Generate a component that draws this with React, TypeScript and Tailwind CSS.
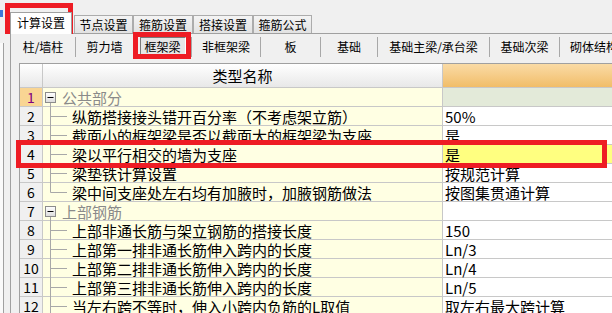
import React from "react";

type Row = { n: number; name: string; value?: string; group?: boolean; last?: boolean };

const rows: Row[] = [
  { n: 1, name: "公共部分", group: true },
  { n: 2, name: "纵筋搭接接头错开百分率（不考虑架立筋）", value: "50%" },
  { n: 3, name: "截面小的框架梁是否以截面大的框架梁为支座", value: "是" },
  { n: 4, name: "梁以平行相交的墙为支座", value: "是" },
  { n: 5, name: "梁垫铁计算设置", value: "按规范计算" },
  { n: 6, name: "梁中间支座处左右均有加腋时，加腋钢筋做法", value: "按图集贯通计算", last: true },
  { n: 7, name: "上部钢筋", group: true },
  { n: 8, name: "上部非通长筋与架立钢筋的搭接长度", value: "150" },
  { n: 9, name: "上部第一排非通长筋伸入跨内的长度", value: "Ln/3" },
  { n: 10, name: "上部第二排非通长筋伸入跨内的长度", value: "Ln/4" },
  { n: 11, name: "上部第三排非通长筋伸入跨内的长度", value: "Ln/5" },
  { n: 12, name: "当左右跨不等时，伸入小跨内负筋的L取值", value: "取左右最大跨计算" },
];

const subTabs: { label: string; w: string; selected?: boolean }[] = [
  { label: "柱/墙柱", w: "w-[64px]" },
  { label: "剪力墙", w: "w-[57px]" },
  { label: "框架梁", w: "w-[57px]", selected: true },
  { label: "非框架梁", w: "w-[68px]" },
  { label: "板", w: "w-[59px]" },
  { label: "基础", w: "w-[56px]" },
  { label: "基础主梁/承台梁", w: "w-[111px]" },
  { label: "基础次梁", w: "w-[69px]" },
];

function GroupTree() {
  return (
    <svg width="19" height="18" className="shrink-0 overflow-visible">
      <defs>
        <linearGradient id="bx" x1="0" y1="0" x2="0" y2="1">
          <stop offset="0" stopColor="#ffffff" />
          <stop offset="1" stopColor="#dcdcdc" />
        </linearGradient>
      </defs>
      <rect x="2.5" y="4.5" width="10" height="10" fill="url(#bx)" stroke="#8c8c8c" />
      <line x1="4.5" y1="9.5" x2="10.5" y2="9.5" stroke="#000" />
      <line x1="7.5" y1="15" x2="7.5" y2="19" stroke="#a8a8a8" />
    </svg>
  );
}

function ChildTree({ last }: { last?: boolean }) {
  return (
    <svg width="29" height="18" className="shrink-0 overflow-visible">
      <line x1="7.5" y1="-1" x2="7.5" y2={last ? 9.5 : 19} stroke="#a8a8a8" />
      <line x1="7.5" y1="9.5" x2="24" y2="9.5" stroke="#a8a8a8" />
    </svg>
  );
}

export default function App() {
  return (
    <div className="relative w-[612px] h-[313px] overflow-hidden bg-[#f0f0f0] flex font-['Noto_Sans_CJK_SC','Noto_Sans',sans-serif] text-black">
      {/* left strip */}
      <div className="w-[10px] shrink-0 flex flex-col">
        <div className="mt-[10px] w-[3px] h-[7px] bg-[#3c78d8]" />
        <div className="mt-[26px] flex-1 flex">
          <div className="w-[3px] bg-[#fafafa]" />
          <div className="w-px bg-[#a0a0a0]" />
        </div>
      </div>

      {/* main tab control */}
      <div className="flex-1 flex flex-col min-w-0">
        <div className="h-[33px] flex items-end shrink-0">
          <div className="relative z-10 -mb-px w-[62px] h-[22px] bg-white border border-b-0 border-[#a0a0a0] flex items-center justify-center text-[12px] leading-none pb-px">
            计算设置
          </div>
          {["节点设置", "箍筋设置", "搭接设置", "箍筋公式"].map((t, i) => (
            <div
              key={t}
              className={`${i === 0 ? "ml-[2px] w-[59px]" : i === 3 ? "w-[59px]" : "w-[60px]"} h-[18px] bg-linear-to-b from-[#f4f4f4] to-[#e2e2e2] border border-b-0 border-[#acacac] flex items-center justify-center text-[12px] leading-none`}
            >
              {t}
            </div>
          ))}
        </div>

        <div className="flex-1 flex flex-col border-l border-t border-[#a0a0a0] min-h-0">
          {/* sub tabs */}
          <div className="h-[29px] shrink-0 flex items-center pb-[3px] text-[12px] leading-none whitespace-nowrap">
            {subTabs.map((s) => (
              <React.Fragment key={s.label}>
                <div className={`${s.w} shrink-0 flex items-center justify-center`}>
                  {s.selected ? (
                    <div className="w-[46px] h-[20px] flex items-center justify-center bg-[#e6e6e6] border border-t-[#7a7a7a] border-l-[#7a7a7a] border-b-white border-r-white">
                      {s.label}
                    </div>
                  ) : (
                    s.label
                  )}
                </div>
                <div className="w-px h-[20px] bg-[#a8a8a8] shrink-0" />
              </React.Fragment>
            ))}
            <div className="pl-[10px]">砌体结构</div>
          </div>

          {/* grid */}
          <div className="ml-[8px] flex-1 border-t border-l border-[#a0a0a0] bg-white flex flex-col min-h-0 text-[15px] leading-none">
            <div className="h-[24px] shrink-0 flex border-b border-[#c8c8c8]">
              <div className="w-[23px] shrink-0 border-r border-[#c8c8c8] bg-linear-to-b from-white to-[#e8e8e8]" />
              <div className="w-[400px] shrink-0 border-r border-[#c8c8c8] bg-linear-to-b from-white to-[#e8e8e8] flex items-center justify-center">
                类型名称
              </div>
              <div className="flex-1 bg-linear-to-b from-[#fadba5] to-[#f1bd68]" />
            </div>

            {rows.map((r) => (
              <div key={r.n} className="h-[19px] shrink-0 flex border-b border-[#c8c8c8]">
                <div
                  className={`w-[23px] shrink-0 border-r border-[#c8c8c8] flex items-center justify-center text-[14px] ${
                    r.n === 1 ? "bg-[#f9d593] text-[#800080]" : "bg-[#f0f0f0]"
                  }`}
                >
                  {r.n}
                </div>
                <div className="w-[400px] shrink-0 border-r border-[#c8c8c8] bg-[#ffffe3] flex items-center whitespace-nowrap overflow-visible">
                  {r.group ? (
                    <>
                      <GroupTree />
                      <span className="text-[#8a8a8a]">{r.name}</span>
                    </>
                  ) : (
                    <>
                      <ChildTree last={r.last} />
                      <span>{r.name}</span>
                    </>
                  )}
                </div>
                <div
                  className={`flex-1 flex items-center pl-[2px] whitespace-nowrap ${
                    r.n === 1 ? "bg-[#e3ead9]" : r.n === 4 ? "bg-[#ffff80]" : "bg-white"
                  }`}
                >
                  {r.value}
                </div>
              </div>
            ))}
          </div>
        </div>
      </div>

      {/* red highlight boxes */}
      <div className="absolute left-[5px] top-[3px] w-[68px] h-[31px] border-[5px] border-[#ee1c24] pointer-events-none" />
      <div className="absolute left-[133px] top-[32px] w-[58px] h-[27px] border-[5px] border-[#ee1c24] pointer-events-none" />
      <div className="absolute left-[16px] top-[140px] w-[591px] h-[28px] border-[5px] border-[#ee1c24] pointer-events-none" />
    </div>
  );
}
